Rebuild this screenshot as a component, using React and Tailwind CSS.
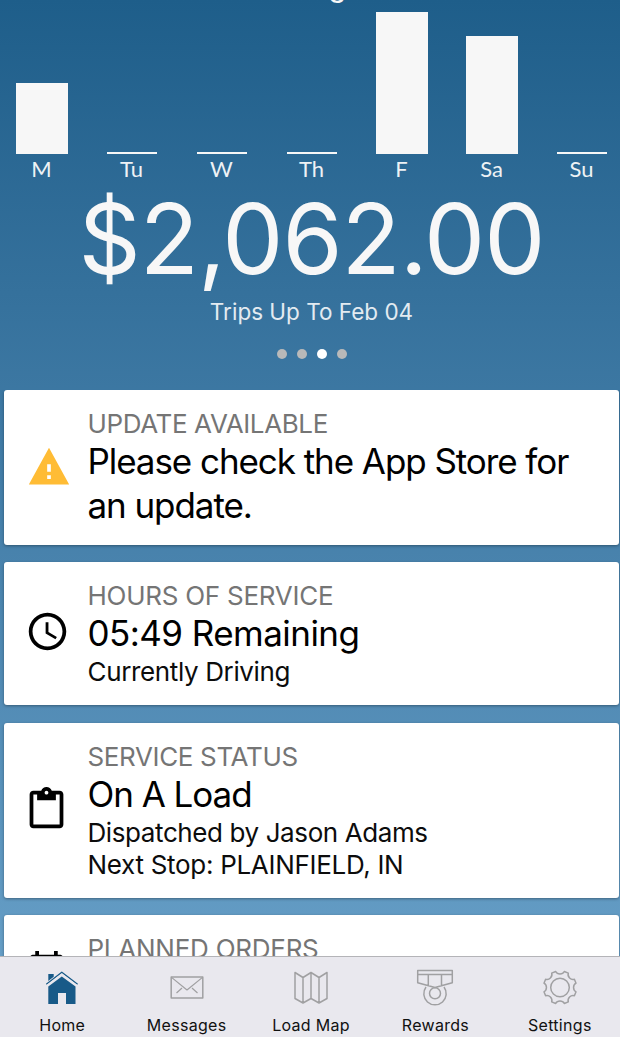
import React from "react";

const days = [
  { label: "M", bar: "h-[71.5px] w-[52px]" },
  { label: "Tu", bar: "h-[2px] w-[50px]" },
  { label: "W", bar: "h-[2px] w-[50px]" },
  { label: "Th", bar: "h-[2px] w-[50px]" },
  { label: "F", bar: "h-[142px] w-[52px]" },
  { label: "Sa", bar: "h-[118px] w-[52px]" },
  { label: "Su", bar: "h-[2px] w-[50px]" },
];

function MaterialIcon({ d, className }) {
  return (
    <svg viewBox="0 0 24 24" fill="currentColor" className={`shrink-0 ${className}`}>
      <path d={d} />
    </svg>
  );
}

const WARNING = "M1 21h22L12 1 1 21zm12-3h-2v-2h2v2zm0-4h-2v-4h2v4z";
const CLOCK =
  "M11.99 2C6.47 2 2 6.48 2 12s4.47 10 9.99 10C17.52 22 22 17.52 22 12S17.52 2 11.99 2zM12 20c-4.42 0-8-3.58-8-8s3.58-8 8-8 8 3.58 8 8-3.58 8-8 8zm.5-13H11v6l5.25 3.15.75-1.23-4.5-2.67z";
const CLIPBOARD =
  "M19 2h-4.18C14.4.84 13.3 0 12 0c-1.3 0-2.4.84-2.82 2H5c-1.1 0-2 .9-2 2v16c0 1.1.9 2 2 2h14c1.1 0 2-.9 2-2V4c0-1.1-.9-2-2-2zm-7 0c.55 0 1 .45 1 1s-.45 1-1 1-1-.45-1-1 .45-1 1-1zm7 18H5V4h2v3h10V4h2v16z";
const CALENDAR =
  "M19 3h-1V1h-2v2H8V1H6v2H5c-1.11 0-2 .9-2 2v14c0 1.1.89 2 2 2h14c1.1 0 2-.9 2-2V5c0-1.1-.9-2-2-2zm0 16H5V8h14v11z";

function Card({ icon, className, title, titleClass, main, mainClass, children }) {
  return (
    <section
      className={`flex shrink-0 rounded-[3px] bg-white pt-[18px] shadow-[0_1px_3px_rgba(0,0,0,0.35)] ${className}`}
    >
      <div className="flex w-[84px] shrink-0 justify-start">{icon}</div>
      <div className="-ml-[0.5px] whitespace-nowrap">
        <h2 className={`-mb-[1px] text-[26px] leading-[32px] text-[#757575] ${titleClass}`}>{title}</h2>
        {main && <p className={`mb-[1px] text-[35px] leading-[44px] text-black ${mainClass}`}>{main}</p>}
        {children}
      </div>
    </section>
  );
}

function gearPath() {
  const teeth = 8;
  const step = (Math.PI * 2) / teeth;
  const half = 0.13;
  const at = (r, a) => `${(22 + r * Math.cos(a)).toFixed(2)} ${(21.5 + r * Math.sin(a)).toFixed(2)}`;
  let d = "";
  for (let i = 0; i < teeth; i++) {
    const a = (i + 0.5) * step;
    const next = a + step;
    d += `${i ? "L" : "M"}${at(16.6, a - half)}L${at(16.6, a + half)}C${at(13, a + half + 0.06)} ${at(13, next - half - 0.06)} ${at(16.6, next - half)}`;
  }
  return d + "Z";
}

function NavIcon({ children }) {
  return (
    <svg
      viewBox="0 0 44 44"
      className="h-[44px] w-[44px]"
      fill="none"
      stroke="#a0a0a2"
      strokeWidth="1.5"
      strokeLinejoin="round"
    >
      {children}
    </svg>
  );
}

const tabs = [
  {
    label: "Home",
    icon: (
      <g stroke="none" fill="#185a88">
        <path d="M8.3 15V8h5.4v2.7L8.3 15z" />
        <path d="M21.8 10.4 35.5 20.6V38H26V27h-8v11H8.3V20.6z" />
        <path d="M6.3 18.2 21.8 6.2 37.6 18.2" fill="none" stroke="#185a88" strokeWidth="1.3" />
        <path d="M7.3 19.2 21.8 8.2 36.6 19.2" fill="none" stroke="#e9e8ee" strokeWidth="1.2" />
      </g>
    ),
  },
  {
    label: "Messages",
    icon: (
      <>
        <path d="M6.2 11.1h31.6v21H6.2z" />
        <path d="M6.2 11.1 22 24 37.8 11.1M11.5 27l5.5-5M32.5 27 27 22" strokeWidth="1.2" />
      </>
    ),
  },
  {
    label: "Load Map",
    icon: <path d="M6 6.5 14 11.5 22 6.5 30 11.5 38 6.5V32.5L30 37 22 32.5 14 37 6 32.5zM14 11.5V37M22 6.5V32.5M30 11.5V37" />,
  },
  {
    label: "Rewards",
    icon: (
      <>
        <path d="M4.7 4.5h34.6v12.3L22 21.5 4.7 16.8zM4.7 8.5h34.6M15.3 8.5v11M28.5 8.5v11" />
        <path d="M13 21a11.2 11.2 0 1 0 18 0" />
        <circle cx="22" cy="27.3" r="5.5" />
      </>
    ),
  },
  {
    label: "Settings",
    icon: (
      <>
        <path d={gearPath()} />
        <circle cx="22" cy="21.5" r="9.3" />
      </>
    ),
  },
];

export default function App() {
  return (
    <div className="flex h-[1037px] w-[620px] flex-col overflow-hidden bg-linear-to-b from-[#1e5e8a] to-[#6ba3cb] font-['Inter','Liberation_Sans',sans-serif]">
      <header className="flex h-[390px] shrink-0 flex-col items-center pl-[3px]">
        <div className="relative flex h-[154px] w-full items-end justify-center gap-[38px]">
          <span className="absolute top-[-28px] left-[326px] text-[27px] leading-[32px] font-medium text-[#f7f7f7]">g</span>
          {days.map((d) => (
            <div key={d.label} className="flex w-[52px] justify-center">
              <div className={`bg-[#f7f7f7] ${d.bar}`} />
            </div>
          ))}
        </div>
        <div className="flex h-[32px] w-full justify-center gap-[38px] font-['Lato',sans-serif] text-[22px] leading-[29px] text-[#eef2f5]">
          {days.map((d) => (
            <span key={d.label} className="w-[52px] text-center">
              {d.label}
            </span>
          ))}
        </div>
        <div className="mt-[3px] h-[108px] text-[97px] leading-[100px] tracking-[-1.05px] whitespace-nowrap text-[#f7f7f7]">
          $2,062.00
        </div>
        <div className="h-[30px] text-[22.5px] leading-[30px] whitespace-nowrap text-[#e3ebf1]">Trips Up To Feb 04</div>
        <div className="mt-[22px] flex gap-[10px]">
          <i className="size-[10px] rounded-full bg-[#b9b9b9]" />
          <i className="size-[10px] rounded-full bg-[#b9b9b9]" />
          <i className="size-[10px] rounded-full bg-white" />
          <i className="size-[10px] rounded-full bg-[#b9b9b9]" />
        </div>
      </header>

      <main className="flex h-[566px] shrink-0 flex-col gap-[17px] overflow-hidden pr-[1px] pl-[4px]">
        <Card
          className="h-[155px]"
          icon={<MaterialIcon d={WARNING} className="mt-[38px] ml-[23px] size-[44px] text-[#ffbc35]" />}
          title="UPDATE AVAILABLE"
          titleClass="tracking-[-0.38px]"
          mainClass="tracking-[-1.07px]"
          main={
            <>
              Please check the App Store for
              <br />
              an update.
            </>
          }
        />
        <Card
          className="h-[143px]"
          icon={<MaterialIcon d={CLOCK} className="mt-[29px] ml-[21px] size-[45px] text-black" />}
          title="HOURS OF SERVICE"
          titleClass="tracking-[-0.26px]"
          main="05:49 Remaining"
          mainClass="tracking-[-0.55px]"
        >
          <p className="text-[26px] leading-[32.5px] tracking-[-0.36px] text-[#0c0c0c]">Currently Driving</p>
        </Card>
        <Card
          className="mt-[0.5px] h-[175.5px]"
          icon={<MaterialIcon d={CLIPBOARD} className="mt-[46.5px] ml-[20px] size-[45px] text-black" />}
          title="SERVICE STATUS"
          titleClass="tracking-[-0.36px]"
          main="On A Load"
          mainClass="tracking-[-1.05px]"
        >
          <p className="text-[26px] leading-[32.5px] tracking-[-0.4px] text-[#0c0c0c]">Dispatched by Jason Adams</p>
          <p className="text-[26px] leading-[32.5px] tracking-[-0.3px] text-[#0c0c0c]">Next Stop: PLAINFIELD, IN</p>
        </Card>
        <Card
          className="h-[150px]"
          icon={<MaterialIcon d={CALENDAR} className="mt-[15.5px] ml-[20px] size-[45px] text-black" />}
          title="PLANNED ORDERS"
          titleClass="tracking-[-0.25px]"
        />
      </main>

      <nav className="flex h-[81px] w-[622px] shrink-0 border-t border-[#b4b4b8] bg-[#e9e8ee]">
        {tabs.map((t) => (
          <div key={t.label} className="flex flex-1 flex-col items-center pt-[9px]">
            <NavIcon>{t.icon}</NavIcon>
            <span className="mt-[5px] text-[16px] leading-[20px] tracking-[0.3px] whitespace-nowrap text-[#111]">
              {t.label}
            </span>
          </div>
        ))}
      </nav>
    </div>
  );
}
